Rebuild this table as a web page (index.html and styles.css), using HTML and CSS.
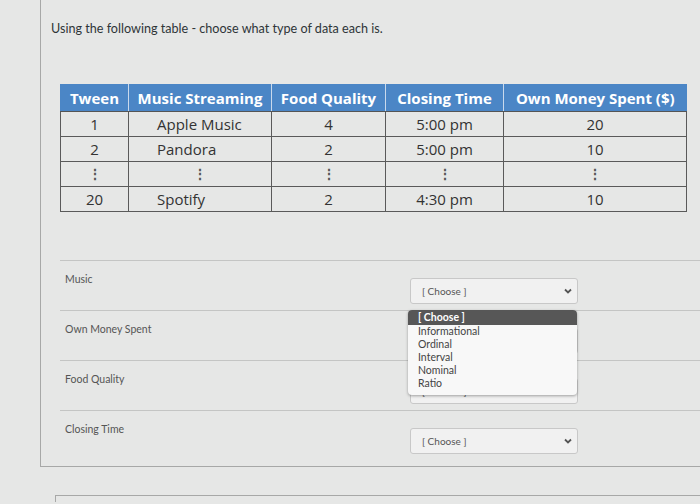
FILE: index.html
```html
<!DOCTYPE html>
<html>
<head>
<meta charset="utf-8">
<link rel="stylesheet" href="styles.css">
</head>
<body>
<div class="question">
  <p class="prompt">Using the following table - choose what type of data each is.</p>
  <table class="data">
    <colgroup>
      <col class="c1"><col class="c2"><col class="c3"><col class="c4"><col class="c5">
    </colgroup>
    <thead>
      <tr><th>Tween</th><th>Music Streaming</th><th>Food Quality</th><th>Closing Time</th><th>Own Money Spent ($)</th></tr>
    </thead>
    <tbody>
      <tr><td>1</td><td class="name">Apple Music</td><td>4</td><td>5:00 pm</td><td>20</td></tr>
      <tr><td>2</td><td class="name">Pandora</td><td>2</td><td>5:00 pm</td><td>10</td></tr>
      <tr class="dots"><td>⋮</td><td>⋮</td><td>⋮</td><td>⋮</td><td>⋮</td></tr>
      <tr><td>20</td><td class="name">Spotify</td><td>2</td><td>4:30 pm</td><td>10</td></tr>
    </tbody>
  </table>
  <div class="answers">
    <div class="row">
      <span class="label">Music</span>
      <div class="select-wrap">
        <div class="select"><span>[ Choose ]</span><svg class="chev" width="8" height="6" viewBox="0 0 8 6"><path d="M1 1.5 L4 4.5 L7 1.5" fill="none" stroke="#555" stroke-width="1.8"/></svg></div>
        <ul class="menu">
          <li class="active">[ Choose ]</li>
          <li>Informational</li>
          <li>Ordinal</li>
          <li>Interval</li>
          <li>Nominal</li>
          <li>Ratio</li>
        </ul>
      </div>
    </div>
    <div class="row">
      <span class="label">Own Money Spent</span>
      <div class="select-wrap">
        <div class="select"><span>[ Choose ]</span><svg class="chev" width="8" height="6" viewBox="0 0 8 6"><path d="M1 1.5 L4 4.5 L7 1.5" fill="none" stroke="#555" stroke-width="1.8"/></svg></div>
      </div>
    </div>
    <div class="row">
      <span class="label">Food Quality</span>
      <div class="select-wrap">
        <div class="select"><span>[ Choose ]</span><svg class="chev" width="8" height="6" viewBox="0 0 8 6"><path d="M1 1.5 L4 4.5 L7 1.5" fill="none" stroke="#555" stroke-width="1.8"/></svg></div>
      </div>
    </div>
    <div class="row last">
      <span class="label">Closing Time</span>
      <div class="select-wrap">
        <div class="select"><span>[ Choose ]</span><svg class="chev" width="8" height="6" viewBox="0 0 8 6"><path d="M1 1.5 L4 4.5 L7 1.5" fill="none" stroke="#555" stroke-width="1.8"/></svg></div>
      </div>
    </div>
  </div>
</div>
<div class="next"></div>
</body>
</html>
```
FILE: styles.css
```css
html, body {
  margin: 0;
  padding: 0;
  background: #e6e7e6;
  font-family: Lato, "Liberation Sans", sans-serif;
  overflow: hidden;
  height: 504px;
}

.question {
  margin-left: 40px;
  border-left: 1px solid #a7a8a7;
  border-bottom: 1px solid #a7a8a7;
  padding-top: 21px;
}

.prompt {
  margin: 0 0 0 10px;
  font-size: 12.6px;
  line-height: 16px;
  color: #2e3538;
}

.data {
  margin: 47px 0 0 19px;
  border-collapse: collapse;
  table-layout: fixed;
  width: 626px;
  font-family: "Open Sans", "Liberation Sans", sans-serif;
  color: #333;
}

.c1 { width: 68px; }
.c2 { width: 143px; }
.c3 { width: 114px; }
.c4 { width: 118px; }
.c5 { width: 183px; }

.data th {
  background: #4b86c6;
  color: #fff;
  font-weight: 700;
  font-size: 15px;
  height: 27px;
  padding: 0;
  border-left: 1px solid #c9d9ec;
  border-bottom: 1px solid #555;
  white-space: nowrap;
}

.data th:first-child { border-left: 1px solid #4b86c6; }

.data td {
  border: 1px solid #5a5a5a;
  height: 24px;
  padding: 0;
  text-align: center;
  font-size: 15px;
  line-height: 18px;
}

.data td.name {
  text-align: left;
  padding-left: 28px;
}

.data tr.dots td {
  font-size: 14px;
  font-weight: 700;
  color: #555;
}

.answers {
  margin: 48px 0 0 19px;
}

.row {
  display: grid;
  grid-template-columns: 350px 168px;
  border-top: 1px solid #c4c5c4;
  height: 49px;
}

.row.last { height: 55px; }

.label {
  padding: 12px 0 0 5px;
  font-size: 10.5px;
  line-height: 13px;
  color: #555;
}

.select-wrap {
  position: relative;
  padding-top: 17px;
}

.select {
  height: 24px;
  border: 1px solid #c8c8c8;
  border-radius: 3px;
  background: #f1f1f1;
  display: flex;
  align-items: center;
  justify-content: space-between;
  padding: 0 5px 0 11px;
  font-size: 10px;
  color: #555;
}

.chev { display: block; }

.menu {
  position: absolute;
  top: 49px;
  left: -2px;
  width: 169px;
  margin: 0;
  padding: 0 0 5px;
  list-style: none;
  background: #f8f8f8;
  border-radius: 4px;
  box-shadow: 0 1px 3px rgba(0,0,0,0.35);
  overflow: hidden;
  z-index: 2;
}

.menu li {
  font-size: 10.5px;
  line-height: 13px;
  padding-left: 10px;
  color: #444;
}

.menu li.active {
  background: #575757;
  color: #fff;
  font-weight: 700;
  line-height: 15px;
}

.next {
  margin: 28px 0 0 55px;
  border-top: 1px solid #a7a8a7;
  border-left: 1px solid #a7a8a7;
  height: 6px;
}
```
